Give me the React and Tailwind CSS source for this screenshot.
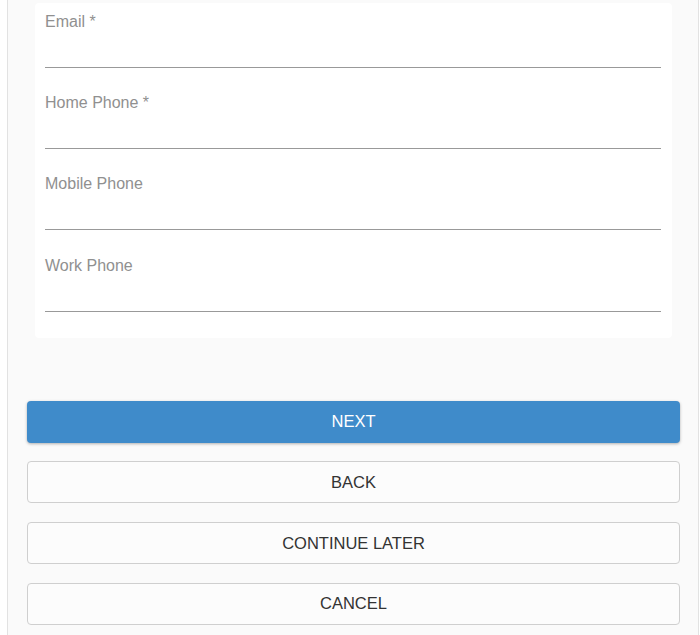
export default function App() {
  const fields = ["Email *", "Home Phone *", "Mobile Phone", "Work Phone"];
  const buttons = ["BACK", "CONTINUE LATER", "CANCEL"];
  return (
    <div className="w-[700px] h-[635px] bg-white overflow-hidden" style={{ fontFamily: '"Liberation Sans", Arial, sans-serif' }}>
      <div className="ml-[7px] w-[692px] h-full bg-[#fafafa] border-l border-r border-[#e2e2e2] pl-[19px] pr-[18px] pt-[3px]">
        <div className="flow-root mx-[8px] bg-white rounded-[4px] pt-[10px] pl-[10px] pr-[11px]">
          {fields.map((f) => (
            <div key={f} className="mb-[26.2px]">
              <div className="text-[16px] leading-[18px] text-[#909090]">{f}</div>
              <div className="h-[37px] border-b border-[#999999]"></div>
            </div>
          ))}
        </div>
        <div className="mt-[63px] flex flex-col gap-[18.6px]">
          <button className="h-[42px] w-full rounded-[4px] bg-[#3f8bca] text-white text-[16.5px] shadow-[0_1px_3px_rgba(0,0,0,0.3)]">
            NEXT
          </button>
          {buttons.map((b) => (
            <button key={b} className="h-[42px] w-full rounded-[4px] bg-[#fcfcfc] border border-[#cfcfcf] text-[#333333] text-[16.5px]">
              {b}
            </button>
          ))}
        </div>
      </div>
    </div>
  );
}
